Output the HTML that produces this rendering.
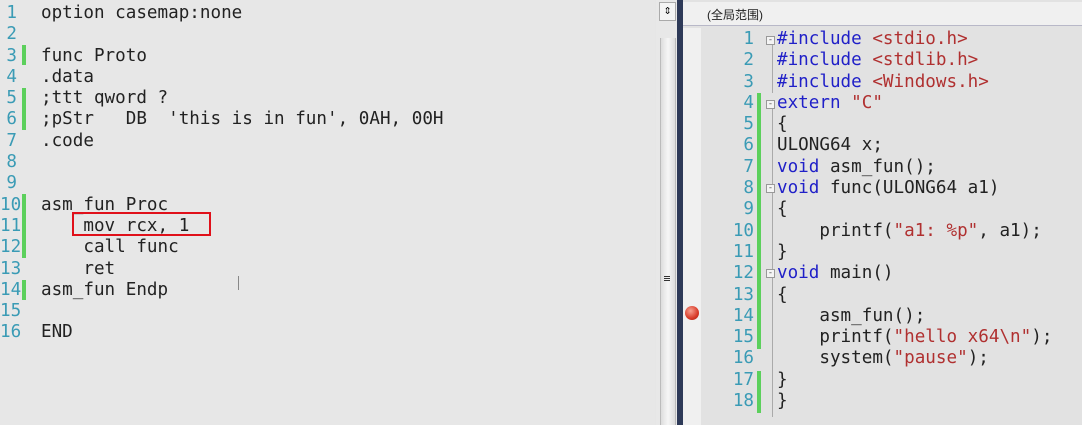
<!DOCTYPE html>
<html><head><meta charset="utf-8"><style>
body{margin:0;width:1082px;height:425px;overflow:hidden;background:#e6e6e6;position:relative;font-family:"DejaVu Sans Mono","Liberation Mono",monospace;}
.l{position:absolute;font-size:17.6px;line-height:21.3px;white-space:pre;color:#222;}
.n{position:absolute;font-size:17.6px;line-height:21.3px;color:#3a9bb5;text-align:right;}
.g{position:absolute;background:#5cd05c;width:4px;}
.k{color:#2020c8}.s{color:#b03030}
</style></head><body>
<div style="position:absolute;left:0;top:0;width:655px;height:425px;background:#e7e7e7"></div>
<div class="n" style="left:0;top:3px;width:17px">1<br>2<br>3<br>4<br>5<br>6<br>7<br>8<br>9<br>10<br>11<br>12<br>13<br>14<br>15<br>16</div>
<div class="g" style="left:22px;top:45px;height:20px"></div>
<div class="g" style="left:22px;top:88px;height:42px"></div>
<div class="g" style="left:22px;top:194px;height:64px"></div>
<div class="g" style="left:22px;top:280px;height:20px"></div>
<div class="l" style="left:41px;top:3px">option casemap:none

func Proto
.data
;ttt qword ?
;pStr   DB  'this is in fun', 0AH, 00H
.code


asm_fun Proc
    mov rcx, 1
    call func
    ret
asm_fun Endp

END</div>
<div style="position:absolute;left:72px;top:212px;width:135px;height:20px;border:2px solid #e0101a"></div>
<div style="position:absolute;left:238px;top:276px;width:1px;height:14px;background:#888"></div>
<div style="position:absolute;left:656px;top:0;width:21px;height:425px;background:#e8e8e8"></div>
<div style="position:absolute;left:659px;top:2px;width:15px;height:17px;background:#f4f4f4;border:1px solid #aaa;font-size:13px;line-height:16px;text-align:center;color:#000">&#8661;</div>
<div style="position:absolute;left:660px;top:38px;width:14px;height:387px;background:linear-gradient(90deg,#ddd,#f6f6f6,#ddd);border-left:1px solid #bbb;border-right:1px solid #bbb"></div>
<div style="position:absolute;left:664px;top:276px;width:6px;height:1px;background:#333;box-shadow:0 2px #333,0 4px #333"></div>
<div style="position:absolute;left:677px;top:0;width:6px;height:425px;background:#2e3a58"></div>
<div style="position:absolute;left:683px;top:0;width:399px;height:425px;background:#e2e2e2"></div>
<div style="position:absolute;left:683px;top:2px;width:399px;height:24px;background:#f0f0f0;border-bottom:1px solid #b8b8c8;font-family:'Liberation Sans','Noto Sans CJK SC',sans-serif;font-size:12px;line-height:26px;color:#222;padding-left:24px;box-sizing:border-box">(全局范围)</div>
<div style="position:absolute;left:683px;top:28px;width:18px;height:397px;background:#f0f0f0"></div>
<div style="position:absolute;left:685px;top:306px;width:14px;height:14px;border-radius:50%;background:radial-gradient(circle at 40% 35%,#f8a090,#d83a28 60%,#a02010)"></div>
<div class="n" style="left:700px;top:29px;width:54px">1<br>2<br>3<br>4<br>5<br>6<br>7<br>8<br>9<br>10<br>11<br>12<br>13<br>14<br>15<br>16<br>17<br>18</div>
<div class="g" style="left:757px;top:93px;height:256px"></div>
<div class="g" style="left:757px;top:371px;height:42px"></div>
<div style="position:absolute;left:772px;top:43px;width:1px;height:50px;background:#aaa"></div>
<div style="position:absolute;left:772px;top:107px;width:1px;height:310px;background:#aaa"></div>
<div style="position:absolute;left:766px;top:36px;width:9px;height:9px;border:1px solid #999;background:#f4f4f4;box-sizing:border-box;font-size:9px;line-height:7px;text-align:center;color:#555">-</div>
<div style="position:absolute;left:766px;top:100px;width:9px;height:9px;border:1px solid #999;background:#f4f4f4;box-sizing:border-box;font-size:9px;line-height:7px;text-align:center;color:#555">-</div>
<div style="position:absolute;left:766px;top:184px;width:9px;height:9px;border:1px solid #999;background:#f4f4f4;box-sizing:border-box;font-size:9px;line-height:7px;text-align:center;color:#555">-</div>
<div style="position:absolute;left:766px;top:269px;width:9px;height:9px;border:1px solid #999;background:#f4f4f4;box-sizing:border-box;font-size:9px;line-height:7px;text-align:center;color:#555">-</div>
<div class="l" style="left:777px;top:29px"><span class="k">#include</span> <span class="s">&lt;stdio.h&gt;</span>
<span class="k">#include</span> <span class="s">&lt;stdlib.h&gt;</span>
<span class="k">#include</span> <span class="s">&lt;Windows.h&gt;</span>
<span class="k">extern</span> <span class="s">"C"</span>
{
ULONG64 x;
<span class="k">void</span> asm_fun();
<span class="k">void</span> func(ULONG64 a1)
{
    printf(<span class="s">"a1: %p"</span>, a1);
}
<span class="k">void</span> main()
{
    asm_fun();
    printf(<span class="s">"hello x64\n"</span>);
    system(<span class="s">"pause"</span>);
}
}</div>
</body></html>
